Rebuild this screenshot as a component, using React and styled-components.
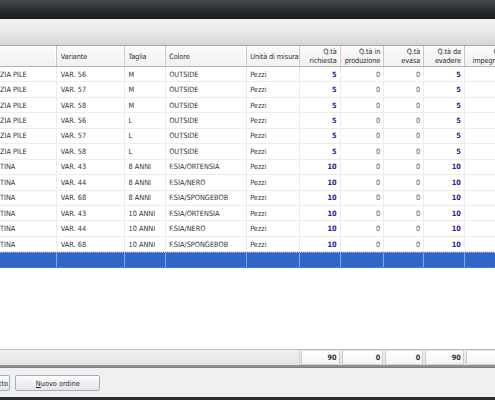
import React from 'react';
import styled, { createGlobalStyle, css } from 'styled-components';

const GlobalStyle = createGlobalStyle`
  html, body {
    margin: 0;
    padding: 0;
    overflow: hidden;
    background: #ffffff;
  }
  body {
    font-family: "DejaVu Sans Condensed", "DejaVu Sans", "Liberation Sans", sans-serif;
    font-stretch: condensed;
    font-size: 7.3px;
    color: #333333;
  }
`;

const COLUMNS = '57.3px 67.7px 40.7px 81px 53.3px 40.7px 43.6px 40px 40.7px 46px';

const Window = styled.div`
  width: 495px;
  height: 400px;
  display: flex;
  flex-direction: column;
  overflow: hidden;
`;

const TitleBar = styled.div`
  height: 19px;
  flex-shrink: 0;
  background: linear-gradient(#46494e, #35373b 35%, #222326 75%, #1c1d1f);
`;

const Toolbar = styled.div`
  height: 26px;
  flex-shrink: 0;
  background: linear-gradient(#f3f3f3, #e6e6e6 55%, #d6d6d6);
  border-bottom: 1px solid #a4a4a4;
`;

const GridView = styled.div`
  flex: 1;
  display: flex;
  flex-direction: column;
  overflow: hidden;
  background: #ffffff;
`;

const HeaderRow = styled.div`
  display: grid;
  grid-template-columns: ${COLUMNS};
  height: 21px;
  flex-shrink: 0;
  box-sizing: border-box;
  background: linear-gradient(#fbfbfb, #f1f1f1);
  border-bottom: 1px solid #b4b4b4;
`;

const HeadCell = styled.div`
  display: flex;
  align-items: center;
  justify-content: ${(p) => (p.$right ? 'flex-end' : 'flex-start')};
  text-align: ${(p) => (p.$right ? 'right' : 'left')};
  padding: ${(p) => (p.$right ? '0 3px 0 2px' : '0 0 0 3.5px')};
  box-sizing: border-box;
  border-right: 1px solid #c6c6c6;
  box-shadow: inset -1px 0 0 #ffffff;
  line-height: 9px;
  letter-spacing: -0.1px;
  color: #2c2c2c;
  white-space: nowrap;
  overflow: hidden;
`;

const Row = styled.div`
  display: grid;
  grid-template-columns: ${COLUMNS};
  height: 15.45px;
  flex-shrink: 0;
  box-sizing: border-box;
  border-bottom: 1px solid #ececec;
  ${(p) =>
    p.$selected &&
    css`
      background: #2f66c7;
      border-top: 1px dotted #9db6e6;
      border-bottom: 1px dotted #5f86d2;
    `}
`;

const Cell = styled.div`
  display: flex;
  align-items: center;
  justify-content: ${(p) => (p.$right ? 'flex-end' : 'flex-start')};
  padding: ${(p) => (p.$first ? '0 2px 0 0' : '0 3px 0 3.5px')};
  box-sizing: border-box;
  border-right: 1px solid ${(p) => (p.$selected ? '#86a6e0' : '#ececec')};
  white-space: nowrap;
  overflow: hidden;
  color: ${(p) => (p.$strong ? '#23239c' : p.$muted ? '#555555' : '#333333')};
  font-weight: ${(p) => (p.$strong ? 'bold' : 'normal')};
`;

const Filler = styled.div`
  flex: 1;
`;

const TotalsBar = styled.div`
  display: grid;
  grid-template-columns: ${COLUMNS};
  height: 16px;
  flex-shrink: 0;
  box-sizing: border-box;
  border-top: 1px solid #bcbcbc;
  background: linear-gradient(#f2f2f2, #e3e3e3);
`;

const TotalsLabel = styled.div`
  grid-column: span 5;
  border-right: 1px solid #cfcfcf;
`;

const TotalCell = styled.div`
  display: flex;
  align-items: center;
  justify-content: flex-end;
  margin: 0 1px;
  padding-right: 2px;
  box-sizing: border-box;
  border: 1px solid #cdcdcd;
  border-top-color: #e2e2e2;
  background: linear-gradient(#ffffff, #f4f4f4);
  font-weight: bold;
  color: #333333;
`;

const Divider = styled.div`
  height: 3px;
  flex-shrink: 0;
  background: linear-gradient(#9a9a9a, #7c7c7c);
`;

const ButtonBar = styled.div`
  height: 29px;
  flex-shrink: 0;
  box-sizing: border-box;
  display: flex;
  align-items: flex-start;
  gap: 5.3px;
  padding-top: 7px;
  background: #eff0f2;
`;

/* the bar is scrolled: only the tail of the first button shows */
const ClippedSlot = styled.div`
  width: 10px;
  display: flex;
  justify-content: flex-end;
`;

const Button = styled.button`
  flex-shrink: 0;
  width: ${(p) => (p.$fit ? 'auto' : '85px')};
  height: 16px;
  padding: ${(p) => (p.$fit ? '0 1px 0 20px' : '0')};
  border: 1px solid #a9acb2;
  border-radius: 2px;
  background: linear-gradient(#fdfdfd, #eef0f3 50%, #e2e4e8);
  font-family: inherit;
  font-stretch: condensed;
  font-size: 7.3px;
  color: #2a2a2a;
  white-space: nowrap;

  u {
    text-decoration: underline;
  }
`;

const BottomEdge = styled.div`
  height: 3px;
  flex-shrink: 0;
  background: #2b2c2e;
`;

const headers = [
  { label: '' },
  { label: 'Variante' },
  { label: 'Taglia' },
  { label: 'Colore' },
  { label: 'Unità di misura' },
  { label: ['Q.tà', 'richiesta'], right: true },
  { label: ['Q.tà in', 'produzione'], right: true },
  { label: ['Q.tà', 'evasa'], right: true },
  { label: ['Q.tà da', 'evadere'], right: true },
  { label: ['Q.tà', 'impegnata'], right: true },
];

const rows = [
  ['ZIA PILE', 'VAR. 56', 'M', 'OUTSIDE', 5],
  ['ZIA PILE', 'VAR. 57', 'M', 'OUTSIDE', 5],
  ['ZIA PILE', 'VAR. 58', 'M', 'OUTSIDE', 5],
  ['ZIA PILE', 'VAR. 56', 'L', 'OUTSIDE', 5],
  ['ZIA PILE', 'VAR. 57', 'L', 'OUTSIDE', 5],
  ['ZIA PILE', 'VAR. 58', 'L', 'OUTSIDE', 5],
  ['TINA', 'VAR. 43', '8 ANNI', 'F.SIA/ORTENSIA', 10],
  ['TINA', 'VAR. 44', '8 ANNI', 'F.SIA/NERO', 10],
  ['TINA', 'VAR. 68', '8 ANNI', 'F.SIA/SPONGEBOB', 10],
  ['TINA', 'VAR. 43', '10 ANNI', 'F.SIA/ORTENSIA', 10],
  ['TINA', 'VAR. 44', '10 ANNI', 'F.SIA/NERO', 10],
  ['TINA', 'VAR. 68', '10 ANNI', 'F.SIA/SPONGEBOB', 10],
];

const App = () => {
  const totRichiesta = rows.reduce((acc, r) => acc + r[4], 0);

  return (
    <Window>
      <GlobalStyle />
      <TitleBar />
      <Toolbar />
      <GridView>
        <HeaderRow>
          {headers.map((h, i) => (
            <HeadCell key={i} $right={h.right}>
              {Array.isArray(h.label) ? (
                <span>
                  {h.label[0]}
                  <br />
                  {h.label[1]}
                </span>
              ) : (
                h.label
              )}
            </HeadCell>
          ))}
        </HeaderRow>
        {rows.map((r, i) => (
          <Row key={i}>
            <Cell $first>{r[0]}</Cell>
            <Cell>{r[1]}</Cell>
            <Cell>{r[2]}</Cell>
            <Cell>{r[3]}</Cell>
            <Cell>Pezzi</Cell>
            <Cell $right $strong>{r[4]}</Cell>
            <Cell $right $muted>0</Cell>
            <Cell $right $muted>0</Cell>
            <Cell $right $strong>{r[4]}</Cell>
            <Cell $right />
          </Row>
        ))}
        <Row $selected>
          {headers.map((h, i) => (
            <Cell key={i} $selected />
          ))}
        </Row>
        <Filler />
      </GridView>
      <TotalsBar>
        <TotalsLabel />
        <TotalCell>{totRichiesta}</TotalCell>
        <TotalCell>0</TotalCell>
        <TotalCell>0</TotalCell>
        <TotalCell>{totRichiesta}</TotalCell>
        <TotalCell />
      </TotalsBar>
      <Divider />
      <ButtonBar>
        <ClippedSlot>
          <Button $fit>Stampa prospetto</Button>
        </ClippedSlot>
        <Button>
          <u>N</u>uovo ordine
        </Button>
      </ButtonBar>
      <BottomEdge />
    </Window>
  );
};

export default App;
